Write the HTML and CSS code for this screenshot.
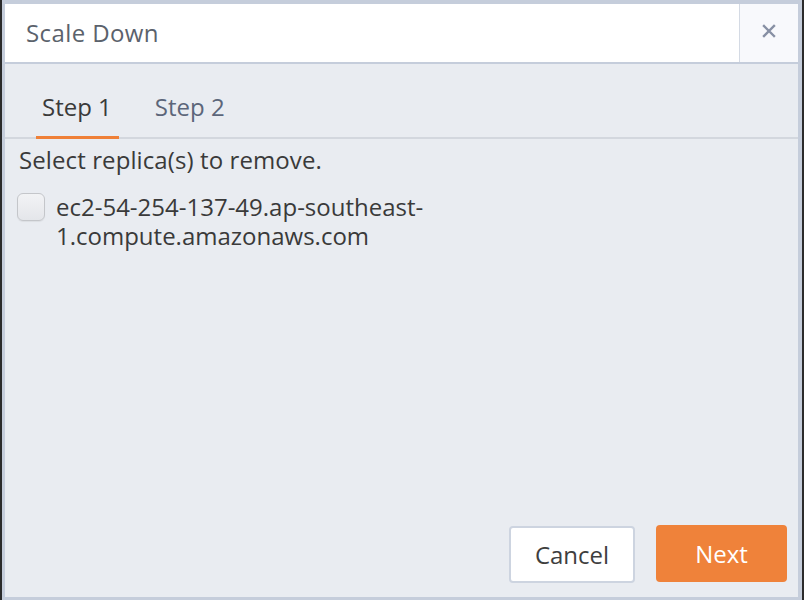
FILE: index.html
```html
<!DOCTYPE html>
<html>
<head>
<meta charset="utf-8">
<link rel="stylesheet" href="styles.css">
</head>
<body>
<div class="frame">
  <div class="dialog">
    <div class="header">
      <div class="title">Scale Down</div>
      <button class="close" aria-label="Close">
        <svg width="14" height="14" viewBox="0 0 14 14"><path d="M2 2 L12 12 M12 2 L2 12" stroke="#8790a4" stroke-width="2.4" stroke-linecap="square"/></svg>
      </button>
    </div>
    <div class="body">
      <div class="tabs">
        <div class="tab active">Step 1</div>
        <div class="tab">Step 2</div>
      </div>
      <div class="content">
        <p class="intro">Select replica(s) to remove.</p>
        <label class="option">
          <span class="checkbox"></span>
          <span class="label-text">ec2-54-254-137-49.ap-southeast-<br>1.compute.amazonaws.com</span>
        </label>
      </div>
      <div class="footer">
        <button class="btn btn-cancel">Cancel</button>
        <button class="btn btn-next">Next</button>
      </div>
    </div>
  </div>
</div>
</body>
</html>
```

FILE: styles.css
```css
* { box-sizing: border-box; }
html, body { margin: 0; padding: 0; }
body {
  width: 804px;
  height: 600px;
  background: #2b2b2b;
  font-family: "Open Sans", "Noto Sans", sans-serif;
  overflow: hidden;
}
.frame {
  width: 804px;
  height: 600px;
  padding: 0 2px;
}
.dialog {
  height: 600px;
  border-style: solid;
  border-color: #c5cddb;
  border-width: 4px 4px 3px 3px;
  background: #e9ecf1;
  display: flex;
  flex-direction: column;
}
.header {
  height: 60px;
  flex: none;
  display: flex;
  background: #fff;
  border-bottom: 2px solid #c5cddb;
}
.title {
  flex: 1;
  padding-left: 21px;
  display: flex;
  align-items: center;
  font-size: 24px;
  letter-spacing: 0.4px;
  color: #5b626c;
  padding-bottom: 2px;
}
.close {
  width: 59px;
  border: none;
  border-left: 1px solid #d4dae4;
  background: #f8f9fc;
  display: flex;
  align-items: center;
  justify-content: center;
  padding: 0;
  padding-bottom: 4px;
}
.body {
  flex: 1;
  display: flex;
  flex-direction: column;
  padding: 0 0 14px 0;
}
.tabs {
  display: flex;
  margin: 19px 0 0 0;
  border-bottom: 2px solid #d3d7de;
  padding-left: 31px;
}
.tab {
  font-size: 24px;
  line-height: 32px;
  padding: 8px 7px 13px 6px;
  margin-right: 30px;
  color: #5c667a;
  margin-bottom: -2px;
  border-bottom: 3px solid transparent;
}
.tab.active {
  color: #3a3a3a;
  border-bottom-color: #ef8038;
}
.content {
  flex: 1;
  padding: 0 14px;
}
.intro {
  margin: 6px 0 0;
  font-size: 24px;
  line-height: 29px;
  letter-spacing: 0.1px;
  color: #3a3a3a;
}
.option {
  display: flex;
  align-items: flex-start;
  margin-top: 20px;
}
.checkbox {
  flex: none;
  width: 28px;
  height: 28px;
  border: 1px solid #c4c6ca;
  border-radius: 6px;
  background: linear-gradient(#f2f3f5, #e4e6ea);
  box-shadow: 0 1px 1px rgba(0,0,0,0.06);
  margin-left: -2px;
  margin-top: -1px;
}
.label-text {
  margin-left: 11px;
  font-size: 24px;
  line-height: 29px;
  color: #3a3a3a;
  margin-top: -2px;
}
.footer {
  display: flex;
  justify-content: flex-end;
  align-items: flex-start;
  gap: 21px;
  padding-right: 11px;
}
.btn {
  font-family: inherit;
  font-size: 24px;
  height: 57px;
  border-radius: 4px;
  padding: 0;
}
.btn-cancel {
  width: 126px;
  background: #fff;
  border: 2px solid #cdd4e0;
  color: #3e3e3e;
  margin-top: 1px;
}
.btn-next {
  width: 131px;
  background: #ef823a;
  border: none;
  color: #fff;
  height: 57px;
}
```
